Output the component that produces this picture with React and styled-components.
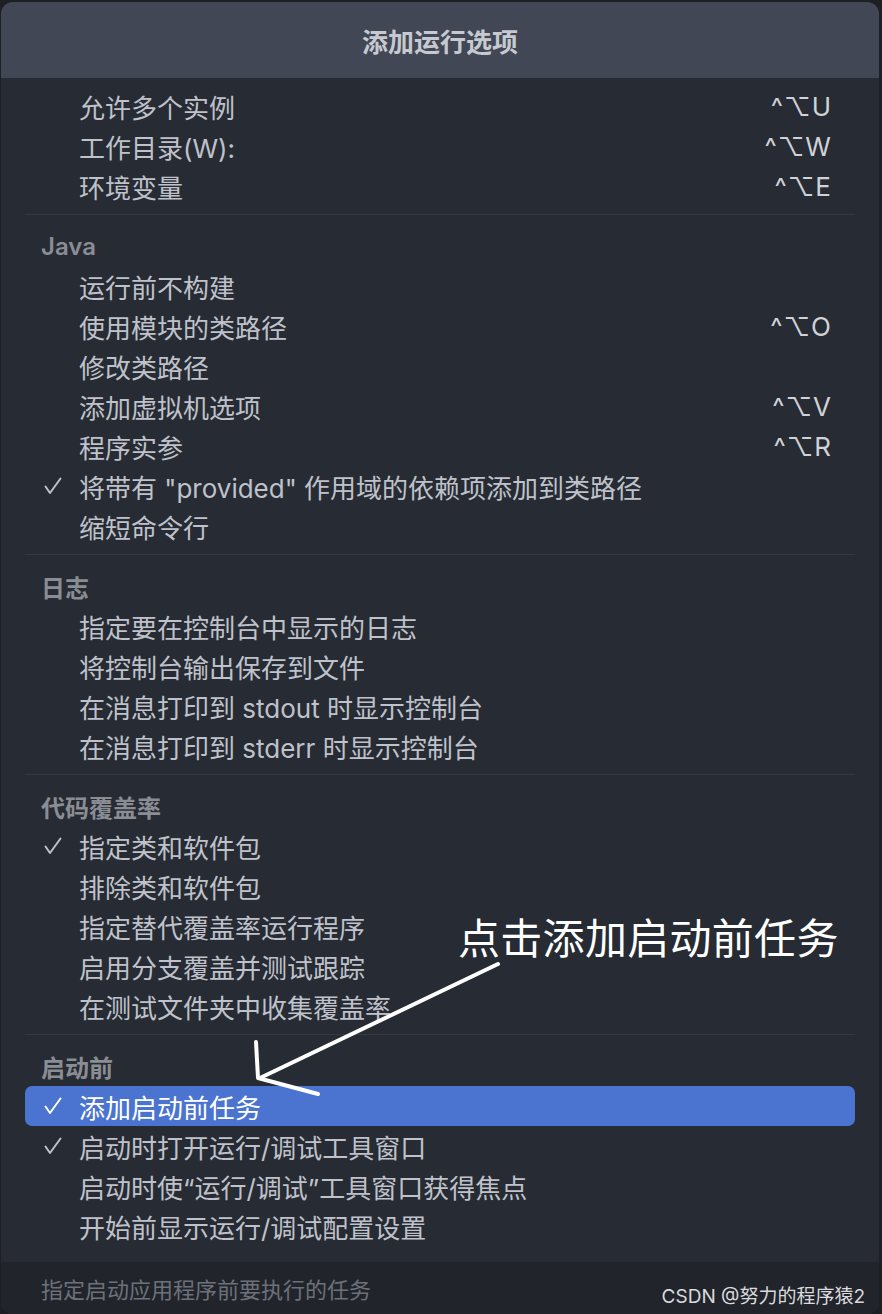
import React from "react";
import styled, { createGlobalStyle } from "styled-components";

const GlobalStyle = createGlobalStyle`
  html, body {
    margin: 0;
    padding: 0;
    background: #1d1f24;
  }
  body {
    font-family: "Inter", "Noto Sans CJK SC", "DejaVu Sans", sans-serif;
  }
`;

const Window = styled.div`
  position: relative;
  width: 878px;
  height: 1312px;
  margin: 2px 3px 0 1px;
  border-radius: 12px;
  overflow: hidden;
  background: #272b33;
  display: flex;
  flex-direction: column;
`;

const TitleBar = styled.div`
  height: 76px;
  flex: none;
  background: #414754;
  display: flex;
  align-items: center;
  justify-content: center;
  color: #c6c9d0;
  font-size: 26px;
  font-weight: 600;
`;

const Body = styled.div`
  flex: 1;
  padding: 8px 0 16px;
`;

const SectionTitle = styled.div`
  height: 40px;
  margin: 0 24px;
  padding-left: 16px;
  display: flex;
  align-items: center;
  color: #8a8d94;
  font-size: 24px;
  font-weight: 600;
`;

const Row = styled.div`
  height: 40px;
  margin: 0 24px;
  padding: 0 23px 0 20px;
  border-radius: 7px;
  display: flex;
  align-items: center;
  background: ${(p) => (p.$active ? "#4a74cf" : "transparent")};
  color: ${(p) => (p.$active ? "#ffffff" : "#bfc2ca")};
  font-size: 26px;
`;

const CheckSlot = styled.span`
  width: 36px;
  flex: none;
  display: flex;
  align-items: center;
  margin-left: -1px;
`;

const Label = styled.span`
  flex: 1;
  white-space: nowrap;
  margin-left: -1px;
`;

const Shortcut = styled.span`
  color: #d0d2d8;
  font-size: 26px;
  letter-spacing: 1px;
`;

const Divider = styled.div`
  height: 1px;
  margin: 8px 24px 11px;
  background: #353942;
`;

const Footer = styled.div`
  height: 52px;
  flex: none;
  background: #21242b;
  display: flex;
  align-items: center;
  padding-left: 40px;
  color: #6d717a;
  font-size: 22px;
`;

const Annotation = styled.div`
  position: absolute;
  left: 457px;
  top: 903px;
  color: #ffffff;
  font-size: 42px;
  letter-spacing: 0.3px;
  pointer-events: none;
`;

const Arrow = styled.svg`
  position: absolute;
  left: 0;
  top: 0;
  pointer-events: none;
`;

const Watermark = styled.div`
  position: absolute;
  right: 14px;
  bottom: 6px;
  color: #d9dadd;
  font-size: 19px;
`;

const Check = () => (
  <svg width="18" height="18" viewBox="0 0 18 18">
    <polyline
      points="1.5,9.5 6,16 16.5,1.5"
      fill="none"
      stroke="currentColor"
      strokeWidth="2"
      strokeLinecap="round"
      strokeLinejoin="round"
    />
  </svg>
);

const sections = [
  {
    items: [
      { label: "允许多个实例", key: "^⌥U" },
      { label: "工作目录(W):", key: "^⌥W" },
      { label: "环境变量", key: "^⌥E" },
    ],
  },
  {
    title: "Java",
    items: [
      { label: "运行前不构建" },
      { label: "使用模块的类路径", key: "^⌥O" },
      { label: "修改类路径" },
      { label: "添加虚拟机选项", key: "^⌥V" },
      { label: "程序实参", key: "^⌥R" },
      { label: '将带有 "provided" 作用域的依赖项添加到类路径', checked: true },
      { label: "缩短命令行" },
    ],
  },
  {
    title: "日志",
    items: [
      { label: "指定要在控制台中显示的日志" },
      { label: "将控制台输出保存到文件" },
      { label: "在消息打印到 stdout 时显示控制台" },
      { label: "在消息打印到 stderr 时显示控制台" },
    ],
  },
  {
    title: "代码覆盖率",
    items: [
      { label: "指定类和软件包", checked: true },
      { label: "排除类和软件包" },
      { label: "指定替代覆盖率运行程序" },
      { label: "启用分支覆盖并测试跟踪" },
      { label: "在测试文件夹中收集覆盖率" },
    ],
  },
  {
    title: "启动前",
    items: [
      { label: "添加启动前任务", checked: true, active: true },
      { label: "启动时打开运行/调试工具窗口", checked: true },
      { label: "启动时使“运行/调试”工具窗口获得焦点" },
      { label: "开始前显示运行/调试配置设置" },
    ],
  },
];

export default function App() {
  return (
    <>
      <GlobalStyle />
      <Window>
        <TitleBar>添加运行选项</TitleBar>
        <Body>
          {sections.map((section, i) => (
            <React.Fragment key={i}>
              {i > 0 && <Divider />}
              {section.title && <SectionTitle>{section.title}</SectionTitle>}
              {section.items.map((item) => (
                <Row key={item.label} $active={item.active}>
                  <CheckSlot>{item.checked && <Check />}</CheckSlot>
                  <Label>{item.label}</Label>
                  {item.key && <Shortcut>{item.key}</Shortcut>}
                </Row>
              ))}
            </React.Fragment>
          ))}
        </Body>
        <Footer>指定启动应用程序前要执行的任务</Footer>
        <Annotation>点击添加启动前任务</Annotation>
        <Arrow width="878" height="1312" viewBox="0 0 878 1312">
          <g
            fill="none"
            stroke="#ffffff"
            strokeWidth="4"
            strokeLinecap="round"
            strokeLinejoin="round"
          >
            <line x1="497" y1="962" x2="259" y2="1076" />
            <polyline points="255,1040 257,1076 317,1092" />
          </g>
        </Arrow>
        <Watermark>CSDN @努力的程序猿2</Watermark>
      </Window>
    </>
  );
}
